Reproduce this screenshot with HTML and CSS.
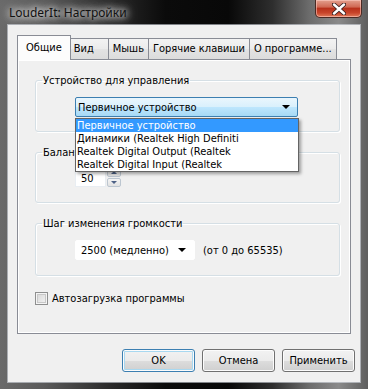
FILE: index.html
```html
<!DOCTYPE html>
<html lang="ru">
<head>
    <meta charset="UTF-8">
    <title>LouderIt: Настройки</title>
    <link rel="stylesheet" href="styles.css">
</head>
<body>
    <div class="window">
        <div class="titlebar">
            <span class="title">LouderIt: Настройки</span>
            <div class="close-btn">
                <svg width="14" height="12" viewBox="0 0 14 12">
                    <path d="M2 1.5 L12 10.5 M12 1.5 L2 10.5" stroke="#3a2020" stroke-width="4.2" stroke-linecap="round"/>
                    <path d="M2 1.5 L12 10.5 M12 1.5 L2 10.5" stroke="#fff" stroke-width="2.4" stroke-linecap="round"/>
                </svg>
            </div>
        </div>

        <div class="client">
            <div class="tabs">
                <div class="tab active">Общие</div>
                <div class="tab">Вид</div>
                <div class="tab">Мышь</div>
                <div class="tab">Горячие клавиши</div>
                <div class="tab">О программе...</div>
            </div>

            <div class="tab-panel">
                <fieldset class="group">
                    <legend>Устройство для управления</legend>
                    <div class="group-body">
                        <div class="combo-wrap">
                            <div class="combo combo-focused">
                                <span>Первичное устройство</span>
                                <i class="arrow"></i>
                            </div>
                            <ul class="dropdown">
                                <li class="selected">Первичное устройство</li>
                                <li>Динамики (Realtek High Definiti</li>
                                <li>Realtek Digital Output (Realtek</li>
                                <li>Realtek Digital Input (Realtek</li>
                            </ul>
                        </div>
                    </div>
                </fieldset>

                <fieldset class="group group-balance">
                    <legend>Баланс</legend>
                    <div class="group-body">
                        <div class="spinner">
                            <div class="spin-edit">50</div>
                            <div class="spin-buttons">
                                <div class="spin-btn"><i class="spin-up"></i></div>
                                <div class="spin-btn"><i class="spin-down"></i></div>
                            </div>
                        </div>
                    </div>
                </fieldset>

                <fieldset class="group group-step">
                    <legend>Шаг изменения громкости</legend>
                    <div class="group-body row">
                        <div class="combo combo-small">
                            <span>2500 (медленно)</span>
                            <i class="arrow"></i>
                        </div>
                        <span class="hint">(от 0 до 65535)</span>
                    </div>
                </fieldset>

                <label class="check-row">
                    <span class="checkbox"></span>
                    Автозагрузка программы
                </label>
            </div>

            <div class="buttons">
                <button class="btn btn-default">OK</button>
                <button class="btn">Отмена</button>
                <button class="btn">Применить</button>
            </div>
        </div>
    </div>
</body>
</html>
```

FILE: styles.css
```css
* {
    margin: 0;
    padding: 0;
    box-sizing: border-box;
}

body {
    width: 368px;
    height: 389px;
    overflow: hidden;
    font-family: 'DejaVu Sans Condensed', 'Liberation Sans', Tahoma, sans-serif;
    font-size: 11px;
    color: #000;
    background: #000;
}

.window {
    height: 389px;
    display: flex;
    flex-direction: column;
    background: linear-gradient(90deg, #6a6a6a 0%, #5a5a5a 12%, #2a2a2a 30%, #0b0b0b 45%, #080808 62%, #2e2e2e 74%, #6c6c6c 84%, #8a8a8a 92%, #5e5e5e 100%);
}

/* title bar */
.titlebar {
    height: 25px;
    display: flex;
    justify-content: space-between;
    align-items: flex-start;
    padding: 0 6px 0 9px;
}

.title {
    font-family: 'Noto Sans', 'Open Sans', sans-serif;
    font-size: 12px;
    line-height: 25px;
    color: #111;
    text-shadow: 0 0 6px #fff, 0 0 10px rgba(255, 255, 255, 0.9), 0 0 14px rgba(255, 255, 255, 0.7);
}

.close-btn {
    width: 47px;
    height: 18px;
    display: flex;
    align-items: center;
    justify-content: center;
    border: 1px solid #4a2a24;
    border-top: none;
    border-radius: 0 0 5px 5px;
    background: linear-gradient(#e3a08e 0%, #d06a55 40%, #b8321c 50%, #c8442a 75%, #e07a5a 100%);
    box-shadow: inset 0 0 0 1px rgba(255, 210, 200, 0.55);
}

/* client area */
.client {
    flex: 1;
    margin: 0 8px 7px;
    background: #f0f0f0;
    box-shadow: 0 0 0 1px rgba(225, 232, 240, 0.55);
    display: flex;
    flex-direction: column;
    padding: 10px 5px 10px 9px;
}

.tabs {
    height: 24px;
    display: flex;
    align-items: flex-end;
    margin-right: 4px;
}

.tab {
    height: 21px;
    min-width: 40px;
    padding: 3px 4px 0 4px;
    border: 1px solid #898c95;
    border-bottom: none;
    margin-right: -1px;
    background: linear-gradient(#f3f3f3, #ebebeb 50%, #e3e3e3 51%, #dcdcdc);
    white-space: nowrap;
}

.tab.active {
    position: relative;
    z-index: 1;
    height: 25px;
    margin: 0 -1px -1px 0;
    padding: 5px 8px 0 8px;
    background: #fcfcfc;
}

.tab.active + .tab {
    margin-left: -1px;
}

.tab-panel {
    flex: 1;
    margin-right: 4px;
    border: 1px solid #898c95;
    background: #f0f0f0;
    box-shadow: inset 0 0 0 1px #fff;
    padding: 14px 10px 0 17px;
    display: flex;
    flex-direction: column;
}

/* group boxes */
.group {
    border: 1px solid #d5dfe5;
    border-radius: 3px;
    padding: 0 6px 14px;
    box-shadow: inset 1px 1px 0 #fff, 1px 1px 0 #fff;
}

.group legend {
    padding: 0 1px;
    line-height: 13px;
}

.group-body {
    padding: 10px 0 0 33px;
}

.group-balance {
    margin-top: 14px;
    padding-bottom: 15px;
}

.group-balance .group-body {
    padding-top: 9px;
}

.group-step {
    margin-top: 14px;
    padding-bottom: 15px;
}

.row {
    display: flex;
    align-items: center;
}

/* combo boxes */
.combo-wrap {
    position: relative;
    width: 223px;
    z-index: 2;
}

.combo {
    height: 20px;
    display: flex;
    align-items: center;
    justify-content: space-between;
    padding: 0 8px 0 2px;
    border: 1px solid #e3e3e3;
    border-radius: 2px;
    background: #fff;
}

.combo-focused {
    border-color: #3c7fb1;
    background: linear-gradient(#eaf6fd 0%, #d9f0fc 50%, #bee6fd 51%, #a7d9f5 100%);
    padding-right: 7px;
}

.combo-small {
    width: 120px;
    padding-left: 5px;
    border-color: #fff;
}

.arrow {
    width: 0;
    height: 0;
    border-left: 4px solid transparent;
    border-right: 4px solid transparent;
    border-top: 4px solid #000;
}

.dropdown {
    position: absolute;
    top: 21px;
    left: 0;
    width: 224px;
    list-style: none;
    background: #fff;
    border: 1px solid #646464;
    box-shadow: 2px 2px 3px rgba(0, 0, 0, 0.35);
}

.dropdown li {
    height: 13px;
    line-height: 13px;
    padding-left: 1px;
    white-space: nowrap;
}

.dropdown li.selected {
    background: #3399ff;
    color: #fff;
}

.hint {
    margin-left: 8px;
}

/* spinner */
.spinner {
    display: flex;
    gap: 1px;
}

.spin-edit {
    width: 31px;
    height: 19px;
    padding: 3px 0 0 5px;
    background: #fff;
    border: 1px solid #e8edf2;
}

.spin-buttons {
    display: flex;
    flex-direction: column;
    gap: 1px;
}

.spin-btn {
    width: 14px;
    height: 9px;
    display: flex;
    align-items: center;
    justify-content: center;
    border: 1px solid #bcc6d0;
    border-radius: 2px;
    background: linear-gradient(#f4f4f4, #e2e2e2);
}

.spin-up {
    border-left: 3px solid transparent;
    border-right: 3px solid transparent;
    border-bottom: 3px solid #4d6185;
}

.spin-down {
    border-left: 3px solid transparent;
    border-right: 3px solid transparent;
    border-top: 3px solid #4d6185;
}

/* checkbox */
.check-row {
    margin-top: 16px;
    display: flex;
    align-items: center;
    gap: 4px;
    line-height: 13px;
}

.checkbox {
    width: 13px;
    height: 13px;
    border: 1px solid #8e8f8f;
    background: linear-gradient(135deg, #d4d4d4, #f6f6f6);
    box-shadow: inset 0 0 0 1px #f4f4f4, inset 0 0 0 2px #c8c8c8;
}

/* dialog buttons */
.buttons {
    margin-top: 15px;
    display: flex;
    justify-content: flex-end;
    gap: 7px;
}

.btn {
    width: 73px;
    height: 23px;
    font-family: inherit;
    font-size: 11px;
    color: #000;
    border: 1px solid #707070;
    border-radius: 3px;
    background: linear-gradient(#f2f2f2 0%, #ebebeb 50%, #dddddd 51%, #cfcfcf 100%);
    box-shadow: inset 0 0 0 1px #fcfcfc;
}

.btn-default {
    border-color: #3c7fb1;
    box-shadow: inset 0 0 0 1px #fcfcfc, inset 0 0 0 2px #a8d8f0;
}
```
